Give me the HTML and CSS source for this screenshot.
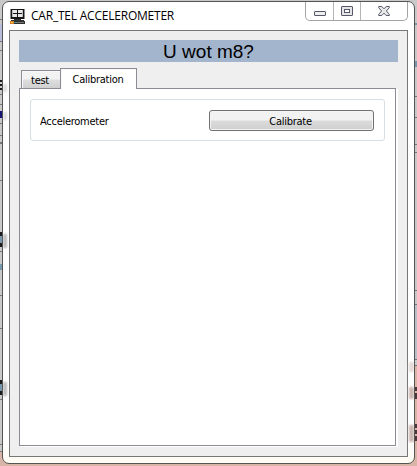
FILE: index.html
```html
<!DOCTYPE html>
<html lang="en">
<head>
<meta charset="utf-8">
<title>CAR_TEL ACCELEROMETER</title>
<link rel="stylesheet" href="styles.css">
</head>
<body>
<svg class="desktop" width="417" height="466" viewBox="0 0 417 466" shape-rendering="crispEdges" aria-hidden="true">
  <path fill="#c9c9c9" d="M0 0h417v466H0z"/>
  <path fill="#d9b5a8" d="M0 452h417v14H0zM412 366h5v100h-5z"/>
  <path fill="#b9c0c7" d="M412 305h5v55h-5z"/>
  <path fill="#b8bdda" d="M0 24h2v17H0z"/>
  <path fill="#777" d="M0 19h2v1H0zM0 41h2v1H0zM0 50h2v1H0zM0 94h2v1H0zM0 104h2v1H0zM0 123h2v1H0zM0 135h2v1H0zM0 142h2v2H0zM0 180h2v1H0zM0 251h2v1H0zM0 295h2v1H0zM0 328h2v1H0zM0 399h2v1H0zM0 444h2v1H0zM0 451h2v1H0zM415 96h2v1h-2zM415 117h2v1h-2zM415 144h2v1h-2zM415 152h2v1h-2zM415 290h2v1h-2zM415 304h2v1h-2zM415 359h2v1h-2zM415 365h2v1h-2z"/>
  <path fill="#1b1b1b" d="M0 80h2v2H0zM0 84h2v2H0zM0 88h2v2H0zM0 232h2v4H0zM0 243h2v4H0zM0 380h2v4H0zM0 391h2v4H0z"/>
  <path fill="#151574" d="M0 111h2v7H0z"/>
  <path fill="#7797ad" d="M0 236h2v7H0zM0 384h2v7H0zM0 264h2v6H0zM415 23h2v2h-2zM415 61h2v6h-2z"/>
  <path fill="#4c3838" d="M415 387h2v4h-2zM415 393h2v6h-2zM415 424h2v4h-2zM415 430h2v4h-2zM415 436h2v5h-2z"/>
</svg>
<main class="window">
  <header class="titlebar">
    <svg class="app-icon" width="17" height="17" viewBox="0 0 17 17" shape-rendering="crispEdges" aria-hidden="true">
      <path fill="#8a8a8a" d="M0 1h15v10H0z"/>
      <path fill="#151515" d="M1 1h13v10H1z"/>
      <path fill="#e8e8e8" d="M3 2h4v3H3zM8 2h4v3H8zM3 6h4v3H3zM8 6h4v3H8z"/>
      <path fill="#bdbdbd" d="M2 2h1v7H2zM12 2h1v7h-1z"/>
      <path fill="#303030" d="M4 11h7v1h3l1 2v2H0v-3l2-1h2z"/>
      <path fill="#d57a26" d="M0 13h4v3H0z"/>
      <path fill="#eed14b" d="M1 14h2v1H1z"/>
      <path fill="#438d9b" d="M4 14h3v1H4z"/>
      <path fill="#777" d="M7 14h7v1H7z"/>
    </svg>
    <h1 class="title">CAR_TEL ACCELEROMETER</h1>
    <div class="controls">
      <span class="control minimize"><svg width="12" height="5" viewBox="0 0 12 5"><rect x=".5" y=".5" width="11" height="4" rx=".5" fill="#eee" stroke="#555768"/></svg></span>
      <span class="control maximize"><svg width="12" height="10" viewBox="0 0 12 10"><rect x=".5" y=".5" width="11" height="9" rx=".5" fill="#e5e5e7" stroke="#555768"/><rect x="3.5" y="3.5" width="5" height="3" fill="#fff" stroke="#555768"/></svg></span>
      <span class="control close"><svg width="12" height="10" viewBox="0 0 12 10"><path d="M.7.5h3.1L6 2.8 8.2.5h3.1v1.2L8.4 5l2.9 3.3v1.2H8.2L6 7.2 3.8 9.5H.7V8.3L3.6 5 .7 1.7z" fill="#e8e8e9" stroke="#555768"/></svg></span>
    </div>
  </header>
  <section class="client">
    <div class="banner">U wot m8?</div>
    <nav class="tabs">
      <span class="tab">test</span>
      <span class="tab active">Calibration</span>
    </nav>
    <div class="panel">
      <div class="group">
        <span class="label">Accelerometer</span>
        <button class="button" type="button">Calibrate</button>
      </div>
    </div>
  </section>
  <i class="smudge left a"></i><i class="smudge left b"></i><i class="smudge left c"></i><i class="smudge left d"></i>
  <i class="smudge right e"></i><i class="smudge right f"></i><i class="smudge right g"></i>
</main>
</body>
</html>
```
FILE: styles.css
```css
* { box-sizing: border-box; }
body {
  margin: 0;
  width: 417px;
  height: 466px;
  overflow: hidden;
  padding: 1px 0 0 2px;
  font: 11px "DejaVu Sans Condensed", "DejaVu Sans", sans-serif;
  letter-spacing: -.27px;
  color: #000;
}
.desktop { position: absolute; left: 0; top: 0; z-index: -1; }
.window {
  position: relative;
  width: 413px;
  height: 463px;
  border: 1px solid #555;
  border-radius: 7px;
  background: linear-gradient(#fff 0 440px, #fffcf3 456px);
  padding: 0 6px;
  overflow: hidden;
}
.titlebar { height: 28px; display: flex; align-items: flex-start; }
.app-icon { margin: 6px 0 0 1px; flex: none; }
.title {
  margin: 4px 0 0 4px;
  font: 12px/20px "Open Sans", "Noto Sans", sans-serif;
  letter-spacing: -.22px;
  white-space: nowrap;
}
.controls {
  display: flex;
  width: 103px;
  height: 19px;
  margin-left: auto;
  margin-right: 0;
  border: 1px solid #a4a4a4;
  border-top: 0;
  border-radius: 0 0 5px 5px;
  flex: none;
}
.control { display: flex; justify-content: center; border-right: 1px solid #b4b4b4; }
.control svg { display: block; }
.minimize { width: 28px; padding-top: 9px; }
.maximize { width: 27px; padding-top: 4px; }
.close { flex: 1; border: 0; padding-top: 4px; }
.client {
  width: 399px;
  height: 427px;
  border: 1px solid #777;
  background: #efefef;
  padding: 9px;
}
.banner {
  width: 379px;
  height: 22px;
  background: #a3b4cd;
  text-align: center;
  letter-spacing: 0;
  font: 19px/23px "Liberation Sans", Arial, sans-serif;
}
.tabs { display: flex; align-items: flex-end; height: 27px; padding-left: 2px; }
.tab {
  position: relative;
  width: 39px;
  height: 19px;
  border: 1px solid #8b8c95;
  border-right: 0;
  background: linear-gradient(#f2f2f2 0 48%, #dedede 52%, #d0d0d0);
  box-shadow: inset 1px 1px #f8f8f8;
  line-height: 19px;
  padding-right: 2px;
  text-align: center;
}
.tab.active {
  z-index: 1;
  width: 77px;
  height: 21px;
  border-right: 1px solid #8b8c95;
  border-bottom: 0;
  background: #fff;
  line-height: 22px;
  padding-right: 1px;
}
.panel {
  width: 377px;
  height: 358px;
  margin-top: -1px;
  border: 1px solid #8b8c95;
  background: #fff;
  box-shadow: 2px 1px #fff;
  padding: 10px;
}
.group {
  display: flex;
  align-items: center;
  justify-content: space-between;
  width: 355px;
  height: 42px;
  border: 1px solid #d5dfe5;
  border-radius: 3px;
  padding: 0 10px 0 9px;
}
.label { padding-top: 2px; }
.button {
  width: 165px;
  height: 21px;
  border: 1px solid #707070;
  border-radius: 3px;
  background: linear-gradient(#f2f2f2 0 48%, #dcdcdc 52%, #cfcfcf);
  box-shadow: inset 0 0 0 1px #f5f5f5;
  padding: 2px 2px 0 0;
  font: inherit;
  letter-spacing: inherit;
  color: #000;
}
.smudge { position: absolute; width: 5px; filter: blur(1.2px); }
.left { left: 0; width: 4px; background: #bdbdbd; }
.right { left: 406px; background: #cbb5b0; }
.a { top: 232px; height: 14px; }
.b { top: 380px; height: 14px; }
.c { top: 110px; height: 8px; background: #ddd; }
.d { top: 82px; height: 8px; background: #ddd; }
.e { top: 360px; height: 10px; background: #e5d9d6; }
.f { top: 385px; height: 12px; }
.g { top: 423px; height: 17px; }
```
